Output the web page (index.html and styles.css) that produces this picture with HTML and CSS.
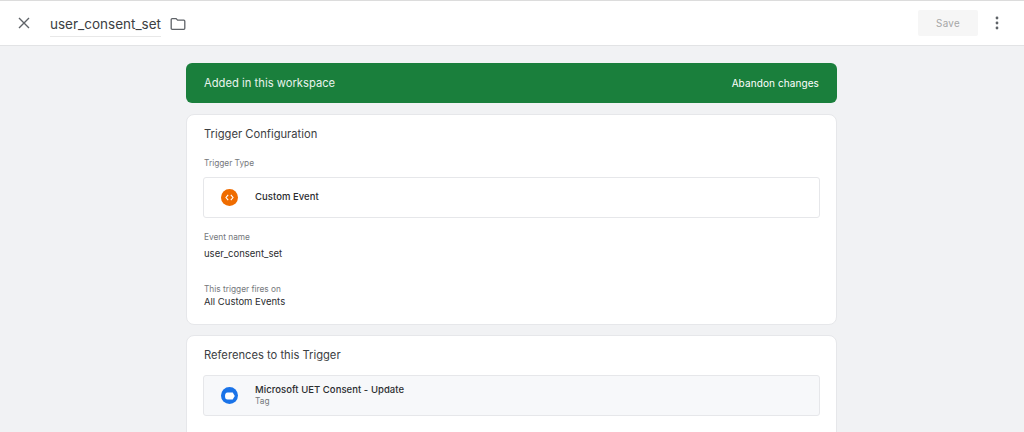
FILE: index.html
```html
<!DOCTYPE html>
<html lang="en">
<head>
<meta charset="utf-8">
<title>user_consent_set</title>
<link rel="stylesheet" href="styles.css">
</head>
<body>
<header class="topbar">
  <svg class="close" viewBox="0 0 14 14" width="14" height="14"><path d="M2 2l10 10M12 2L2 12"/></svg>
  <div class="name">user_consent_set</div>
  <svg class="folder" viewBox="0 0 16 14" width="16" height="14"><path d="M1.2 2.600c0-.6.4-1 1-1h3.900l1.500 1.600h6.200c.6 0 1 .4 1 1v7.100c0 .6-.4 1-1 1H2.200c-.6 0-1-.4-1-1z"/></svg>
  <div class="spacer"></div>
  <button class="save">Save</button>
  <svg class="more" viewBox="0 0 4 14" width="4" height="14"><circle cx="2" cy="2" r="1.400"/><circle cx="2" cy="7" r="1.400"/><circle cx="2" cy="12" r="1.400"/></svg>
</header>
<main class="content">
  <div class="banner">
    <span class="banner-text">Added in this workspace</span>
    <span class="abandon">Abandon changes</span>
  </div>
  <section class="card config">
    <h2 class="card-title">Trigger Configuration</h2>
    <div class="label type-label">Trigger Type</div>
    <div class="row">
      <span class="badge orange"><svg viewBox="0 0 10 8" width="9" height="7"><path d="M3.500 1L1 4l2.500 3M6.500 1L9 4 6.500 7"/></svg></span>
      <span class="row-title">Custom Event</span>
    </div>
    <div class="label event-label">Event name</div>
    <div class="value event-value">user_consent_set</div>
    <div class="label fires-label">This trigger fires on</div>
    <div class="value">All Custom Events</div>
  </section>
  <section class="card refs">
    <h2 class="card-title">References to this Trigger</h2>
    <div class="row tinted">
      <span class="badge blue"><svg viewBox="0 0 10 8" width="10" height="8"><path d="M2.500.5h5.200L9.800 4 7.700 7.500H2.500A2.500 3.500 0 0 1 2.500.5z"/></svg></span>
      <div class="row-text">
        <span class="row-title">Microsoft UET Consent - Update</span>
        <span class="row-sub">Tag</span>
      </div>
    </div>
  </section>
</main>
</body>
</html>
```
FILE: styles.css
```css
html, body {
  margin: 0;
  height: 432px;
  overflow: hidden;
}
body {
  background: #f1f2f4;
  font-family: "Inter", "Roboto", sans-serif;
  color: #2b2d30;
}
.topbar {
  box-sizing: border-box;
  height: 46px;
  background: #fff;
  border-top: 1px solid #dcdcdc;
  border-bottom: 1px solid #e2e3e5;
  display: flex;
  align-items: center;
  padding: 0 25px 0 17px;
}
.close {
  fill: none;
  stroke: #5f6368;
  stroke-width: 1.400;
  margin-right: 19px;
}
.name {
  font-size: 13.500px;
  line-height: 24px;
  color: #3c4043;
  border-bottom: 1px solid #e8e8e8;
  margin-right: 9px;
  margin-top: 2px;
}
.folder {
  fill: none;
  stroke: #5f6368;
  stroke-width: 1.300;
  margin-top: 1px;
}
.spacer { flex: 1; }
.save {
  width: 60px;
  height: 26px;
  margin-right: 17px;
  border: 0;
  border-radius: 2px;
  background: #f6f6f6;
  color: #a6a6a6;
  font: 400 9.800px "Inter", sans-serif;
  letter-spacing: .3px;
}
.more { fill: #5f6368; }
.content {
  width: 651px;
  margin: 17px 0 0 186px;
  display: flex;
  flex-direction: column;
  gap: 10px;
}
.banner {
  box-sizing: border-box;
  height: 40px;
  margin-bottom: 1px;
  background: #1a7f3c;
  border-radius: 6px;
  color: #fff;
  display: flex;
  align-items: center;
  justify-content: space-between;
  padding: 0 18px;
}
.banner-text { font-size: 11.200px; color: #e8f3ec; letter-spacing: .02px; }
.abandon { font-size: 10px; font-weight: 400; letter-spacing: .1px; }
.card {
  box-sizing: border-box;
  background: #fff;
  border: 1px solid #e6e7ea;
  border-radius: 8px;
  padding: 11px 16px 0;
}
.config { height: 211px; }
.refs { height: 110px; }
.card-title {
  margin: 0;
  padding-left: 1px;
  font-size: 11.200px;
  line-height: 17px;
  font-weight: 400;
  color: #3c4043;
}
.label {
  padding-left: 1px;
  font-size: 8.300px;
  line-height: 12px;
  color: #75787c;
}
.type-label { margin-top: 14px; }
.row {
  box-sizing: border-box;
  height: 41px;
  margin-top: 8px;
  border: 1px solid #e6e7ea;
  border-radius: 3px;
  display: flex;
  align-items: center;
  padding-left: 17px;
  gap: 17px;
}
.refs .row { margin-top: 11px; }
.tinted { background: #f7f8fa; }
.badge {
  width: 17px;
  height: 17px;
  border-radius: 50%;
  display: flex;
  align-items: center;
  justify-content: center;
  flex: none;
}
.orange { background: #ef6c00; }
.orange svg { fill: none; stroke: #fff; stroke-width: 1.300; }
.blue { background: #1a73e8; }
.blue svg { fill: #fff; }
.row-title {
  font-size: 9.500px;
  line-height: 13px;
  font-weight: 500;
  color: #2b2d30;
  letter-spacing: .05px;
}
.row > .row-title { margin-bottom: 2px; }
.row-text { display: flex; flex-direction: column; margin-bottom: 1px; }
.row-sub {
  font-size: 8.300px;
  line-height: 11px;
  color: #75787c;
}
.event-label { margin-top: 13px; }
.value {
  padding-left: 1px;
  font-size: 9.500px;
  line-height: 14px;
  color: #2b2d30;
}
.event-value { margin-top: 4px; }
.fires-label { margin-top: 22px; }
```
